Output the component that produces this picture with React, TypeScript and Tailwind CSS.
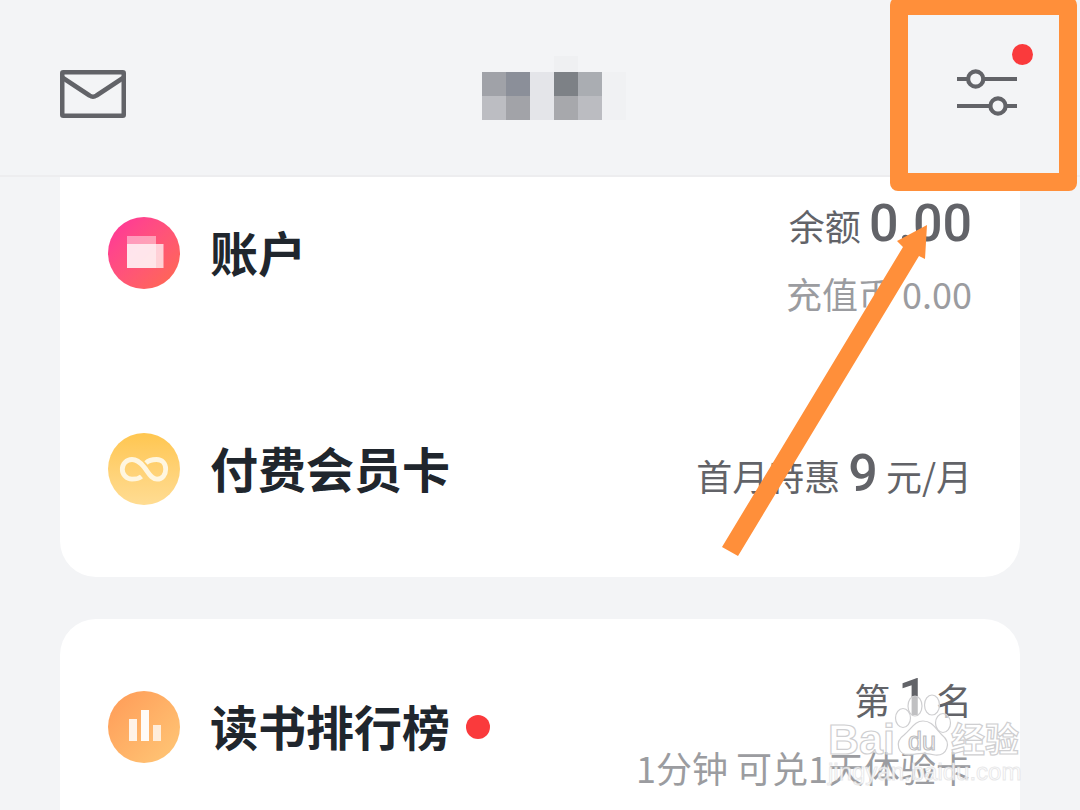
import type { ReactNode } from "react";

const mosaic = [
  "bg-[#a0a2a8]",
  "bg-[#8b8f99]",
  "bg-[#e4e5e9]",
  "bg-[#7d8186]",
  "bg-[#aaadb2]",
  "bg-[#bcbdc2]",
  "bg-[#a2a3a8]",
  "bg-[#e4e5e9]",
  "bg-[#a7a8ac]",
  "bg-[#bbbcc1]",
];

function MailIcon() {
  return (
    <svg width="66" height="48" viewBox="0 0 66 48" fill="none" stroke="#626368" strokeWidth="4.5" strokeLinejoin="round">
      <rect x="2.25" y="2.25" width="61.5" height="43.5" rx="1" />
      <path d="M3 8 L29.5 25.5 Q33 28 36.5 25.5 L63 8" />
    </svg>
  );
}

function FilterIcon() {
  return (
    <svg width="60" height="48" viewBox="0 0 60 48" fill="none" stroke="#626368" strokeWidth="4.2">
      <path d="M0 11H10M27 11H60M0 38H33M49 38H60" />
      <circle cx="18.7" cy="11" r="7.6" />
      <circle cx="41" cy="38" r="7.6" />
    </svg>
  );
}

function WalletIcon() {
  return (
    <svg width="72" height="72" viewBox="0 0 72 72">
      <path d="M19 19H48V27H19Z" fill="#fff" fillOpacity="0.45" />
      <path d="M19 27H48V51H19Z" fill="#fff" fillOpacity="0.85" />
      <path d="M48 27H55.5V51H48Z" fill="#fff" fillOpacity="0.72" />
    </svg>
  );
}

function InfinityIcon() {
  return (
    <svg width="72" height="72" viewBox="0 0 72 72" fill="none" stroke="#fff6e0" strokeWidth="4.8">
      <path d="M33.500 43.500C31 45.500 28 46.200 24 46.200C18.500 46.200 14.300 41.500 14.300 36.200C14.300 31 18.500 26.500 24 26.500C29 26.500 32 29 36 34C40.500 39.500 43 46.200 49 46.200C54.500 46.200 57.700 41.500 57.700 36.200C57.700 31 54.500 26.500 48.500 26.500C44.500 26.500 41 27 38 30" />
    </svg>
  );
}

function ChartIcon() {
  return (
    <svg width="72" height="72" viewBox="0 0 72 72" fill="#fff">
      <rect x="21" y="28" width="8" height="22" fillOpacity="0.85" />
      <rect x="33" y="19" width="8" height="31" fillOpacity="0.95" />
      <rect x="45" y="34" width="8" height="16" fillOpacity="0.75" />
    </svg>
  );
}

type RowProps = {
  icon: ReactNode;
  iconBg: string;
  title: string;
  dot?: boolean;
  className?: string;
  children: ReactNode;
};

function Row({ icon, iconBg, title, dot, className = "", children }: RowProps) {
  return (
    <div className={`flex items-center px-12 ${className}`}>
      <div className={`size-[72px] shrink-0 rounded-full ${iconBg}`}>{icon}</div>
      <h2 className="ml-[30px] pb-1 text-5xl leading-[56px] font-bold text-[#20262d]">{title}</h2>
      {dot && <span className="ml-4 size-6 rounded-full bg-[#fa3a3c]" />}
      <div className="ml-auto pt-3 text-right text-4xl text-[#626368]">{children}</div>
    </div>
  );
}

function Figure({ children }: { children: ReactNode }) {
  return <span className="font-[Roboto] text-[52px] leading-[56px] font-medium">{children}</span>;
}

function Watermark() {
  return (
    <div className="absolute top-[692px] right-[58px] w-[194px] font-['Liberation_Sans','Noto_Sans_CJK_SC',sans-serif] font-bold">
      <svg className="block w-full overflow-visible" height="66" viewBox="0 0 194 66" fill="#fff" fillOpacity="0.6" stroke="#cfcfd1" strokeWidth="1.2">
        <text x="0" y="62" fontSize="43">Bai</text>
        <ellipse cx="75" cy="26" rx="7.5" ry="9.5" />
        <ellipse cx="87" cy="14" rx="7" ry="10" />
        <ellipse cx="104" cy="13" rx="7.500" ry="10" />
        <ellipse cx="115" cy="31" rx="7.500" ry="9.500" />
        <path d="M95 29C87 29 84 36 76 43C66 50 70 64 82 63C90 61 99 61 107 63C119 64 124 51 114 43C107 36 104 29 95 29Z" />
        <text x="80" y="58" fontSize="25" fontWeight="400" stroke="#bdbdc0">du</text>
        <text x="123" y="60" fontSize="34">经验</text>
      </svg>
      <p className="text-2xl leading-7 font-normal whitespace-nowrap text-white/80 [-webkit-text-stroke:1px_#d4d4d688]">jingyan.baidu.com</p>
    </div>
  );
}

export default function App() {
  return (
    <div className="relative flex h-screen flex-col overflow-hidden bg-[#f3f4f6] font-['Noto_Sans_CJK_SC',sans-serif]">
      <header className="flex h-[177px] shrink-0 items-center justify-between border-b-2 border-[#ededef] pt-2 pr-[63px] pb-2 pl-[60px]">
        <button aria-label="消息" className="mt-3">
          <MailIcon />
        </button>
        <div className="relative mt-4">
          <div className="grid grid-cols-5">
            {mosaic.map((tone, i) => (
              <span key={i} className={`size-6 ${tone}`} />
            ))}
          </div>
          <span className="absolute bottom-full left-[72px] h-4 w-6 bg-[#eff0f2]" />
          <span className="absolute left-full top-0 h-12 w-6 bg-[#f0f1f3]" />
        </div>
        <button aria-label="设置" className="relative mt-2">
          <FilterIcon />
          <span className="absolute -top-6 -right-4 size-[21px] rounded-full bg-[#fa3a3c]" />
        </button>
      </header>

      <main className="flex grow flex-col gap-[42px] px-[60px]">
        <section className="rounded-b-[36px] bg-white">
          <Row icon={<WalletIcon />} iconBg="bg-linear-to-br from-[#ff2f9c] to-[#ff6a4a]" title="账户" className="h-[184px] pb-8">
            <p className="leading-[68px]">
              余额 <Figure>0.00</Figure>
            </p>
            <p className="leading-[68px] text-[#9b9ca0]">充值币 0.00</p>
          </Row>
          <Row icon={<InfinityIcon />} iconBg="bg-linear-to-b from-[#ffc64f] to-[#ffdc92]" title="付费会员卡" className="h-[216px]">
            <p className="leading-[68px]">
              首月特惠 <Figure>9</Figure> 元/月
            </p>
          </Row>
        </section>

        <section className="grow rounded-t-[36px] bg-white">
          <Row icon={<ChartIcon />} iconBg="bg-linear-to-br from-[#ff9a57] to-[#ffc877]" title="读书排行榜" dot className="h-[216px]">
            <p className="leading-[68px]">
              第 <Figure>1</Figure> 名
            </p>
            <p className="leading-[68px] text-[#9b9ca0]">1分钟 可兑1天体验卡</p>
          </Row>
        </section>
      </main>

      <Watermark />
      <div className="absolute -top-[3px] right-[3px] h-[194px] w-[187px] rounded-lg border-[18px] border-[#ff8f3a]" />
      <svg className="absolute top-[225px] right-[153px]" width="205" height="332" viewBox="0 0 205 332" fill="#ff8f3a">
        <path d="M205 0L203 34L197 31L16 331L0 322L181 22L175 16Z" />
      </svg>
    </div>
  );
}
